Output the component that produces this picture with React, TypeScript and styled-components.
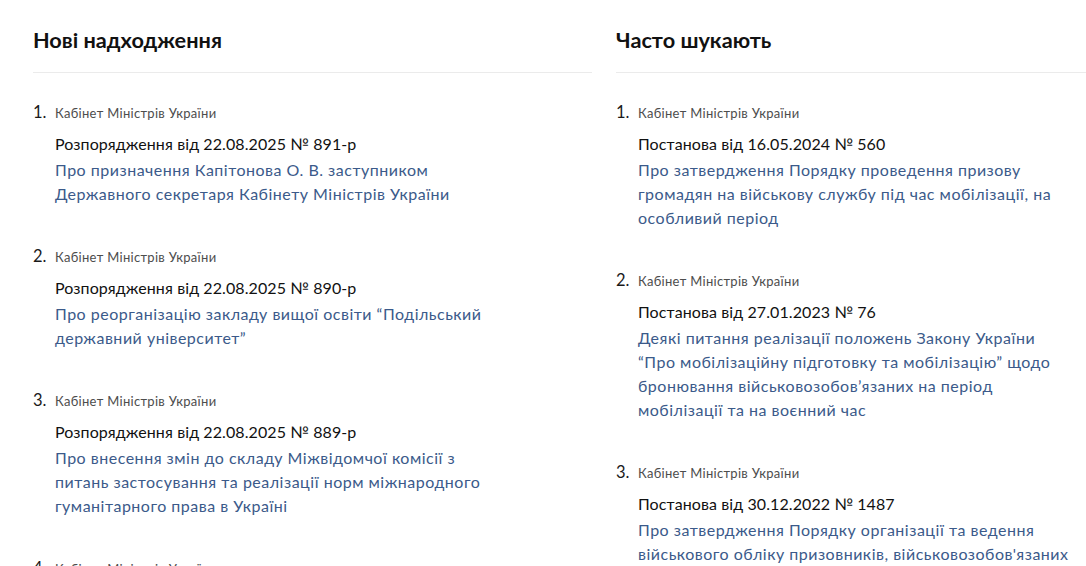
import styled, { createGlobalStyle } from 'styled-components';

const GlobalStyle = createGlobalStyle`
  html, body {
    margin: 0;
    padding: 0;
    background: #ffffff;
    overflow: hidden;
  }
  body {
    font-family: Lato, "Noto Sans", sans-serif;
    color: #1a1a1a;
  }
`;

const Page = styled.main`
  display: grid;
  grid-template-columns: 559px 559px;
  column-gap: 24px;
  padding-left: 33px;
  width: max-content;
`;

const Column = styled.section`
  display: flex;
  flex-direction: column;
`;

const Header = styled.div`
  padding: 26px 0 18px;
  border-bottom: 1px solid #ebebeb;
`;

const Heading = styled.h2`
  margin: 0;
  font-size: 21.7px;
  line-height: 28px;
  font-weight: 700;
  color: #111111;
`;

const List = styled.ol`
  list-style: none;
  margin: 0;
  padding: 29px 0 0;
  display: flex;
  flex-direction: column;
  gap: 40px;
`;

const Item = styled.li`
  display: grid;
  grid-template-columns: 22px 436px;
  align-items: baseline;
`;

const Num = styled.span`
  font-size: 16.5px;
  line-height: 20px;
  color: #1a1a1a;
`;

const Org = styled.span`
  font-size: 13px;
  line-height: 20px;
  letter-spacing: 0.3px;
  color: #4d4d4d;
`;

const Title = styled.div`
  grid-column: 2;
  margin-top: 9px;
  font-size: 16px;
  line-height: 24px;
  letter-spacing: 0.1px;
  color: #111111;
`;

const Desc = styled.a`
  grid-column: 2;
  margin-top: 2px;
  font-size: 16px;
  line-height: 24px;
  letter-spacing: 0.5px;
  color: #3b5a8a;
  text-decoration: none;
`;

type Doc = { title: string; desc: string };

const fresh: Doc[] = [
  {
    title: 'Розпорядження від 22.08.2025 № 891-р',
    desc: 'Про призначення Капітонова О. В. заступником Державного секретаря Кабінету Міністрів України',
  },
  {
    title: 'Розпорядження від 22.08.2025 № 890-р',
    desc: 'Про реорганізацію закладу вищої освіти “Подільський державний університет”',
  },
  {
    title: 'Розпорядження від 22.08.2025 № 889-р',
    desc: 'Про внесення змін до складу Міжвідомчої комісії з питань застосування та реалізації норм міжнародного гуманітарного права в Україні',
  },
  {
    title: 'Розпорядження від 22.08.2025 № 888-р',
    desc: 'Про затвердження плану заходів',
  },
];

const popular: Doc[] = [
  {
    title: 'Постанова від 16.05.2024 № 560',
    desc: 'Про затвердження Порядку проведення призову громадян на військову службу під час мобілізації, на особливий період',
  },
  {
    title: 'Постанова від 27.01.2023 № 76',
    desc: 'Деякі питання реалізації положень Закону України “Про мобілізаційну підготовку та мобілізацію” щодо бронювання військовозобов’язаних на період мобілізації та на воєнний час',
  },
  {
    title: 'Постанова від 30.12.2022 № 1487',
    desc: 'Про затвердження Порядку організації та ведення військового обліку призовників, військовозобов\'язаних та резервістів',
  },
];

function DocList({ docs }: { docs: Doc[] }) {
  return (
    <List>
      {docs.map((d, i) => (
        <Item key={i}>
          <Num>{i + 1}.</Num>
          <Org>Кабінет Міністрів України</Org>
          <Title>{d.title}</Title>
          <Desc href="#">{d.desc}</Desc>
        </Item>
      ))}
    </List>
  );
}

export default function App() {
  return (
    <>
      <GlobalStyle />
      <Page>
        <Column>
          <Header>
            <Heading>Нові надходження</Heading>
          </Header>
          <DocList docs={fresh} />
        </Column>
        <Column>
          <Header>
            <Heading>Часто шукають</Heading>
          </Header>
          <DocList docs={popular} />
        </Column>
      </Page>
    </>
  );
}
